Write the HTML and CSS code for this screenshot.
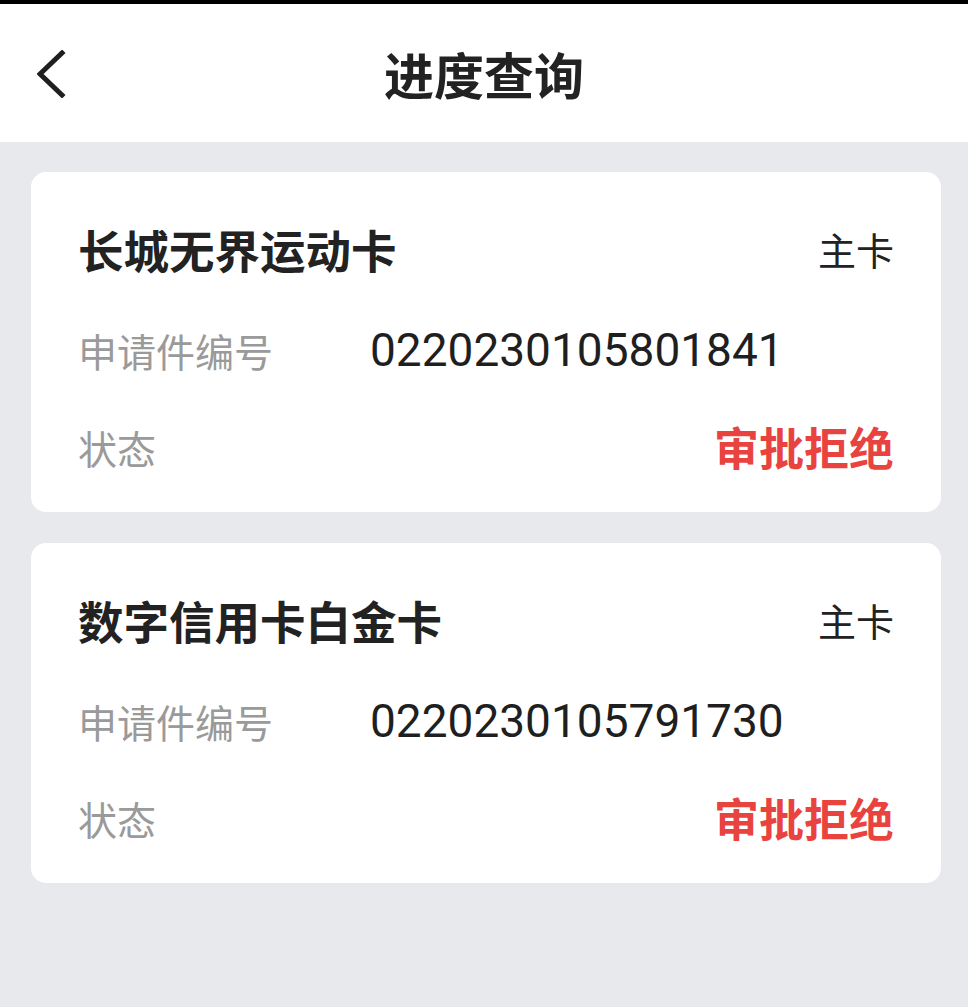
FILE: index.html
```html
<!DOCTYPE html>
<html lang="zh-CN">
<head>
  <meta charset="UTF-8" />
  <meta name="viewport" content="width=device-width, initial-scale=1.0" />
  <title>进度查询</title>
  <link rel="stylesheet" href="styles.css">
</head>
<body>
  <div class="topbar"></div>

  <!-- 顶部导航 -->
  <header class="header">
    <div class="back">
      <svg width="30" height="48" viewBox="0 0 30 48">
        <polyline points="25,3 3,24 25,45" fill="none" stroke="#1f1f1f" stroke-width="5" stroke-linecap="square" />
      </svg>
    </div>
    <h1>进度查询</h1>
    <div></div>
  </header>

  <!-- 申请列表 -->
  <main class="list">
    <div class="card">
      <div class="row title-row">
        <span class="name">长城无界运动卡</span>
        <span class="type">主卡</span>
      </div>
      <div class="row">
        <span class="label">申请件编号</span>
        <span class="number">0220230105801841</span>
      </div>
      <div class="row status-row">
        <span class="label">状态</span>
        <span class="status">审批拒绝</span>
      </div>
    </div>

    <div class="card">
      <div class="row title-row">
        <span class="name">数字信用卡白金卡</span>
        <span class="type">主卡</span>
      </div>
      <div class="row">
        <span class="label">申请件编号</span>
        <span class="number">0220230105791730</span>
      </div>
      <div class="row status-row">
        <span class="label">状态</span>
        <span class="status">审批拒绝</span>
      </div>
    </div>
  </main>
</body>
</html>
```

FILE: styles.css
```css
body {
  margin: 0;
  background-color: #e8e9ed;
  font-family: "Noto Sans CJK SC", "Noto Sans", sans-serif;
  color: #1f1f1f;
  min-height: 1007px;
}

.topbar {
  height: 4px;
  background-color: #000;
}

.header {
  display: grid;
  grid-template-columns: 1fr auto 1fr;
  align-items: center;
  height: 138px;
  background-color: #ffffff;
}

.back {
  padding-left: 37px;
  display: flex;
  align-items: center;
  padding-top: 2px;
}

.header h1 {
  margin: 0;
  font-size: 50px;
  font-weight: 700;
  line-height: 60px;
  color: #222;
}

.list {
  padding: 30px 27px 0 31px;
  display: flex;
  flex-direction: column;
  gap: 31px;
}

.card {
  background-color: #ffffff;
  border-radius: 15px;
  padding: 38px 47px 35px;
}

.row {
  display: flex;
  align-items: center;
  line-height: 60px;
  margin-top: 32px;
}

.status-row {
  margin-top: 37px;
}

.title-row {
  margin-top: 0;
  line-height: 78px;
  justify-content: space-between;
}

.name {
  font-size: 45.5px;
  font-weight: 700;
  color: #222;
}

.type {
  font-size: 38px;
  color: #222;
}

.label {
  font-size: 39px;
  color: #9a9a9a;
  width: 292px;
}

.number {
  font-family: Roboto, "Noto Sans", sans-serif;
  font-size: 46px;
  color: #1f1f1f;
}

.status {
  margin-left: auto;
  font-size: 45px;
  font-weight: 700;
  color: #e8433f;
}
```
